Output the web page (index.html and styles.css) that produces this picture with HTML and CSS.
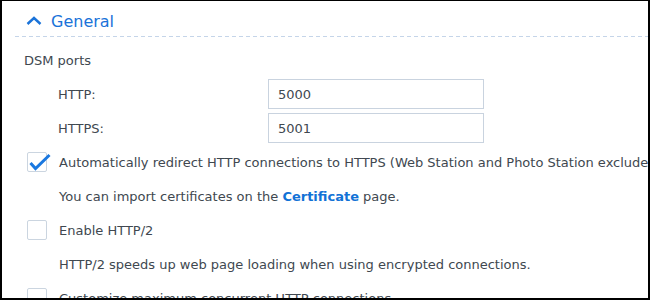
FILE: index.html
```html
<!DOCTYPE html>
<html lang="en">
<head>
  <meta charset="UTF-8">
  <title>General settings</title>
  <link rel="stylesheet" href="styles.css">
</head>
<body>
  <div class="frame">
    <div class="section-head">
      <svg class="chevron" width="16" height="10" viewBox="0 0 16 10">
        <path d="M1.5 8 L8 2 L14.5 8" fill="none" stroke="#1a73d9" stroke-width="2.4"/>
      </svg>
      <span class="section-title">General</span>
    </div>

    <div class="section-body">
      <div class="row group-label">DSM ports</div>

      <div class="row port">
        <span class="port-label">HTTP:</span>
        <input class="field" type="text" value="5000">
      </div>
      <div class="row port">
        <span class="port-label">HTTPS:</span>
        <input class="field" type="text" value="5001">
      </div>

      <div class="row option">
        <span class="checkbox checked">
          <svg class="tick" width="26" height="20" viewBox="0 0 26 20">
            <path d="M2.5 10 L7.5 15.5 L21.5 2" fill="none" stroke="#1a78e0" stroke-width="3"/>
          </svg>
        </span>
        <span>Automatically redirect HTTP connections to HTTPS (Web Station and Photo Station excluded)</span>
      </div>
      <div class="row note">
        <span>You can import certificates on the <a href="#" class="link">Certificate</a> page.</span>
      </div>

      <div class="row option">
        <span class="checkbox"></span>
        <span>Enable HTTP/2</span>
      </div>
      <div class="row note">
        <span>HTTP/2 speeds up web page loading when using encrypted connections.</span>
      </div>

      <div class="row option">
        <span class="checkbox"></span>
        <span>Customize maximum concurrent HTTP connections</span>
      </div>
    </div>
  </div>
</body>
</html>
```

FILE: styles.css
```css
html {
  box-sizing: border-box;
  background: #000;
}

*, *:before, *:after {
  box-sizing: inherit;
}

body {
  margin: 0;
  font-family: "DejaVu Sans", Verdana, sans-serif;
  font-size: 13px;
  color: #404850;
}

.frame {
  width: 650px;
  height: 300px;
  border: 2px solid #000;
  border-top-width: 1px;
  background: #fff;
  overflow: hidden;
  white-space: nowrap;
}

.section-head {
  display: flex;
  align-items: center;
  height: 36px;
  padding-top: 4px;
  margin-left: 13px;
  padding-left: 11px;
  background: repeating-linear-gradient(90deg, #c5d5e9 0 4px, transparent 4px 7px) bottom left / 100% 1px no-repeat;
}

.chevron {
  margin-right: 9px;
}

.section-title {
  font-size: 16px;
  color: #1a73d9;
}

.section-body {
  padding-top: 6px;
}

.row {
  display: flex;
  align-items: center;
  height: 34px;
}

.group-label {
  padding-left: 22px;
}

.port {
  padding-left: 56px;
}

.port-label {
  width: 210px;
}

.field {
  width: 216px;
  height: 30px;
  border: 1px solid #c9d3df;
  border-radius: 0;
  padding: 0 9px;
  font: inherit;
  color: inherit;
  outline: none;
}

.option {
  padding-left: 25px;
}

.checkbox {
  position: relative;
  flex: none;
  width: 20px;
  height: 20px;
  margin-right: 12px;
  border: 1px solid #cbd5e0;
  border-radius: 2px;
  background: #fff;
}

.tick {
  position: absolute;
  left: 0;
  top: 0;
}

.note {
  padding-left: 57px;
}

.link {
  color: #1272d6;
  font-weight: bold;
  text-decoration: none;
}
```
